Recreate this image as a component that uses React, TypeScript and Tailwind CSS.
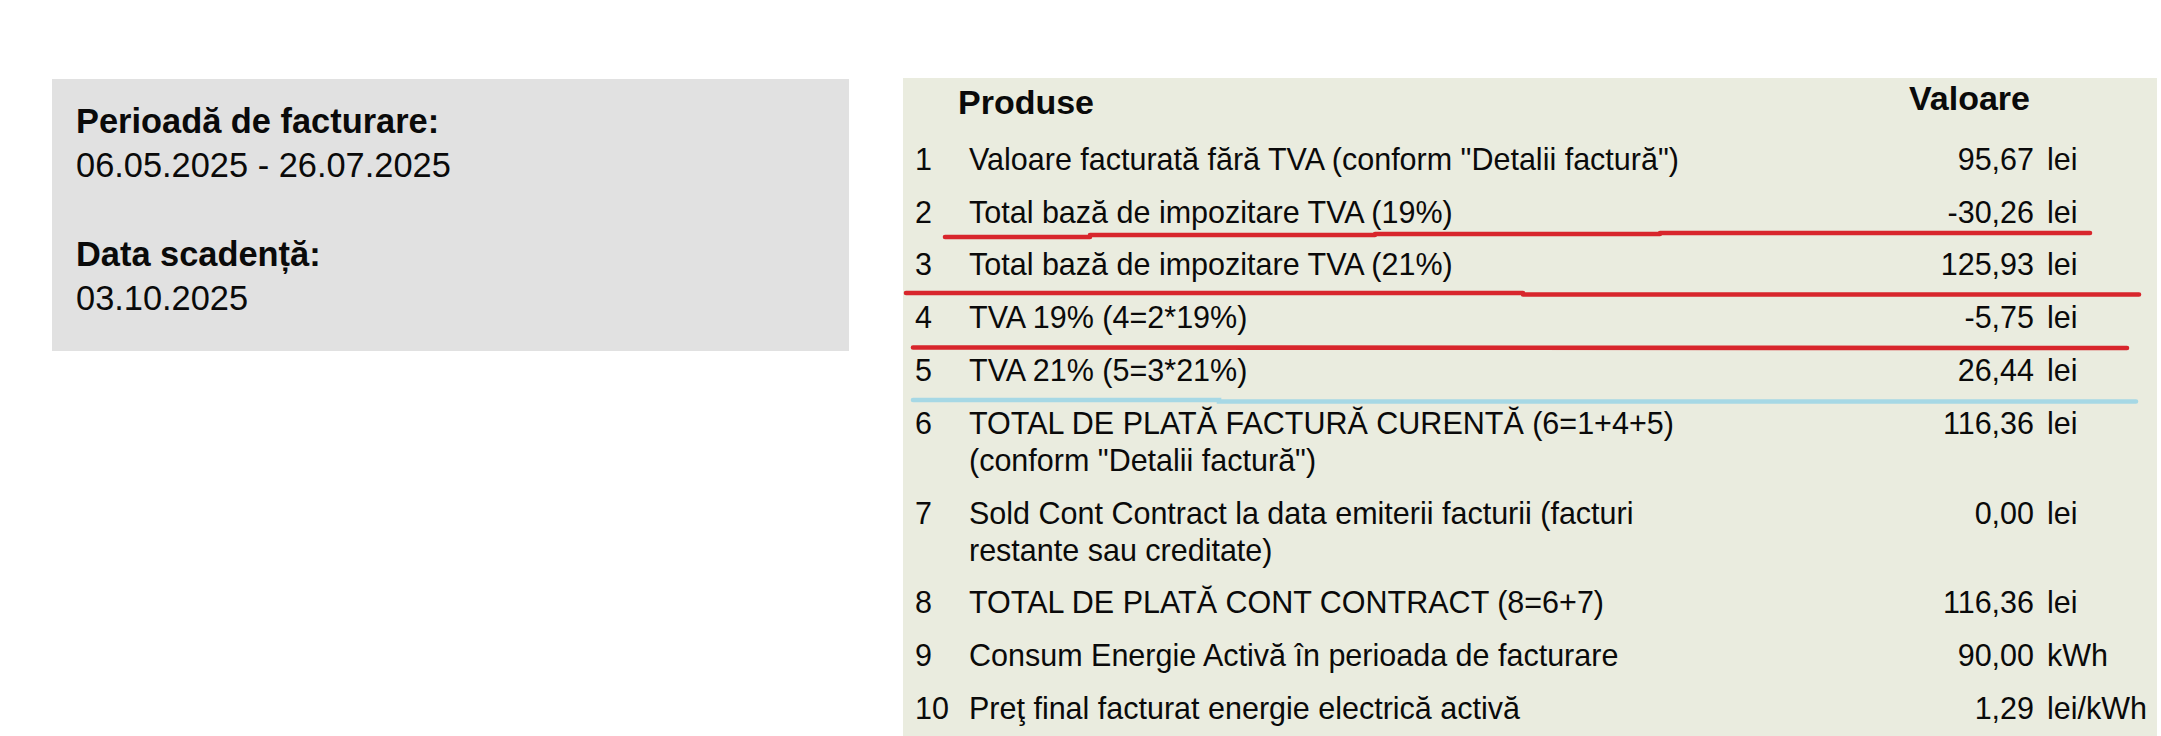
import React from "react";

type Row = {
    nr: number;
    lines: string[];
    value: string;
    unit: string;
};

// randurile din tabelul "Produse" (valorile sunt afisate ca in factura)
const rows: Row[] = [
    { nr: 1, lines: ['Valoare facturată fără TVA (conform "Detalii factură")'], value: "95,67", unit: "lei" },
    { nr: 2, lines: ["Total bază de impozitare TVA (19%)"], value: "-30,26", unit: "lei" },
    { nr: 3, lines: ["Total bază de impozitare TVA (21%)"], value: "125,93", unit: "lei" },
    { nr: 4, lines: ["TVA 19% (4=2*19%)"], value: "-5,75", unit: "lei" },
    { nr: 5, lines: ["TVA 21% (5=3*21%)"], value: "26,44", unit: "lei" },
    {
        nr: 6,
        lines: ["TOTAL DE PLATĂ FACTURĂ CURENTĂ (6=1+4+5)", '(conform "Detalii factură")'],
        value: "116,36",
        unit: "lei",
    },
    {
        nr: 7,
        lines: ["Sold Cont Contract la data emiterii facturii (facturi", "restante sau creditate)"],
        value: "0,00",
        unit: "lei",
    },
    { nr: 8, lines: ["TOTAL DE PLATĂ CONT CONTRACT (8=6+7)"], value: "116,36", unit: "lei" },
    { nr: 9, lines: ["Consum Energie Activă în perioada de facturare"], value: "90,00", unit: "kWh" },
    { nr: 10, lines: ["Preţ final facturat energie electrică activă"], value: "1,29", unit: "lei/kWh" },
];

// liniile trase de mana peste tabel (coordonate relative la panou)
function Markings() {
    return (
        <svg
            className="absolute left-0 top-0 pointer-events-none"
            width={1254}
            height={658}
            viewBox="0 0 1254 658"
            fill="none"
        >
            <g stroke="#d8262c" strokeWidth={4.6} strokeLinecap="round" strokeLinejoin="round">
                <polyline points="42,159 187,159 187,157 472,157 472,156 757,156 757,155 1187,155" />
                <polyline points="3,215 620,215 620,216.5 1236,216.5" />
                <polyline points="10,269.5 1224,270" />
            </g>
            <polyline
                points="10,322 316,322 316,323.5 1233,323.5"
                stroke="#a6d8e5"
                strokeWidth={4.6}
                strokeLinecap="round"
            />
        </svg>
    );
}

export default function App() {
    return (
        <div className="w-full h-[736px] bg-white overflow-hidden font-['Liberation_Sans',Arial,sans-serif] text-[#0a0a0a]">
            <div className="flex items-start gap-[54px] pt-[78px] pl-[52px] pr-[4px]">
                {/* panou perioada / scadenta */}
                <div className="w-[797px] h-[272px] mt-[1px] bg-[#e1e1e1] pt-[20px] pl-[24px] text-[34.4px] leading-[44px]">
                    <p className="font-bold">Perioadă de facturare:</p>
                    <p>06.05.2025 - 26.07.2025</p>
                    <p className="font-bold mt-[45px]">Data scadență:</p>
                    <p>03.10.2025</p>
                </div>

                {/* panou produse */}
                <div className="relative flex-1 h-[658px] bg-[#eaecdf] overflow-hidden pl-[12px]">
                    <div className="flex items-start justify-between h-[55px] pr-[127px] text-[34px] leading-[40px] font-bold">
                        <span className="ml-[43px] mt-[4px]">Produse</span>
                        <span>Valoare</span>
                    </div>

                    {rows.map((row) => (
                        <div key={row.nr} className="flex items-start py-[7.9px] text-[30.5px] leading-[37px]">
                            <span className="w-[54px] shrink-0">{row.nr}</span>
                            <div className="flex-1 whitespace-nowrap">
                                {row.lines.map((line) => (
                                    <div key={line}>{line}</div>
                                ))}
                            </div>
                            <span className="w-[140px] shrink-0 text-right">{row.value}</span>
                            <span className="w-[110px] shrink-0 ml-[13px] whitespace-nowrap">{row.unit}</span>
                        </div>
                    ))}

                    <Markings />
                </div>
            </div>
        </div>
    );
}
